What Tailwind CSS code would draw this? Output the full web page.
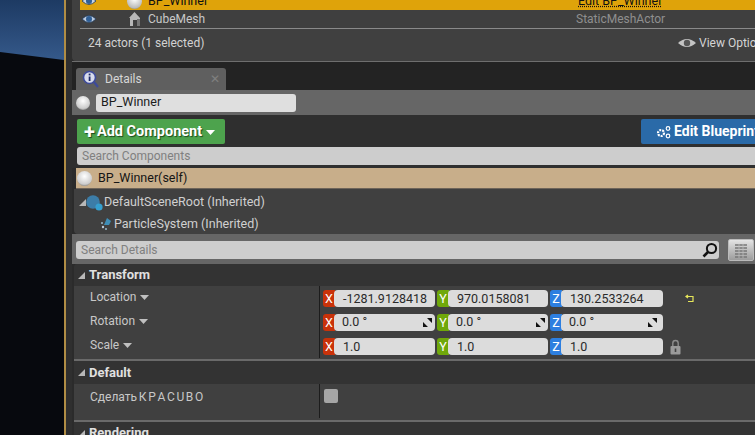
<!DOCTYPE html>
<html lang="en">
<head>
    <meta charset="UTF-8">
    <title>Details panel</title>
    <script src="https://cdn.jsdelivr.net/npm/@tailwindcss/browser@4"></script>
</head>
<body class="bg-[#2b2b2b] overflow-hidden">
<div class="flex w-[800px] h-[435px] overflow-hidden font-[family-name:Roboto,sans-serif] text-[12px] text-[#d4d4d4]">

    <!-- viewport strip -->
    <div class="w-[64px] h-full shrink-0">
        <svg width="64" height="435" viewBox="0 0 64 435" class="block">
            <defs>
                <linearGradient id="sky" x1="0" y1="0" x2="0" y2="1">
                    <stop offset="0" stop-color="#1d3a63"/>
                    <stop offset="1" stop-color="#35598a"/>
                </linearGradient>
            </defs>
            <rect width="64" height="60" fill="url(#sky)"/>
            <polygon points="0,52 64,60 64,435 0,435" fill="#07090e"/>
        </svg>
    </div>
    <div class="w-[2px] shrink-0 bg-[#b08d45]"></div>
    <div class="w-[6px] shrink-0 bg-[#2f2f2f]"></div>

    <div class="flex-1 flex flex-col min-w-0">
        <!-- world outliner tail -->
        <div class="bg-[#404040] rounded-b-[4px] h-[61px] shrink-0 overflow-hidden">
            <div class="ml-[8px] -mt-[8px] h-[18px] bg-[#dfa30a] flex items-center text-[#111] text-[12.5px]">
                <svg width="16" height="12" viewBox="0 0 16 12" class="ml-[1px]"><path d="M1 6 Q8 -1 15 6 Q8 13 1 6Z" fill="#c8d4e4" stroke="#1e3a5a" stroke-width="0.8"/><circle cx="8" cy="6" r="3" fill="#2f5f96"/></svg>
                <div class="ml-[30px] w-[15px] h-[15px] rounded-full bg-[radial-gradient(circle_at_50%_35%,#fff,#bbb_70%,#555)]"></div>
                <span class="ml-[6px] w-[430px]">BP_Winner</span>
                <span class="underline decoration-dotted">Edit BP_Winner</span>
            </div>
            <div class="ml-[8px] h-[18px] bg-[#3f3f3f] flex items-center text-[12px] text-[#c8c8c8] border-b border-[#8a8a8a] box-content">
                <svg width="16" height="12" viewBox="0 0 16 12" class="ml-[1px]"><path d="M1 6 Q8 -1 15 6 Q8 13 1 6Z" fill="#b9c8dc" stroke="#1e3a5a" stroke-width="0.8"/><circle cx="8" cy="6" r="3" fill="#2f5f96"/></svg>
                <svg width="13" height="16" viewBox="0 0 13 16" class="ml-[31px]"><path d="M6.5 1 L12 7 V15 H9 V9 H5 V15 H2 V7 L1 7 Z" fill="#b8b8b8"/><rect x="9" y="8" width="3" height="7" fill="#777"/></svg>
                <span class="ml-[7px] w-[428px]">CubeMesh</span>
                <span class="text-[#8f8f8f]">StaticMeshActor</span>
            </div>
            <div class="flex items-center h-[32px] pl-[16px] pb-[4px] text-[12px]">
                <span class="w-[590px] text-[#d2d2d2]">24 actors (1 selected)</span>
                <svg width="18" height="12" viewBox="0 0 18 12"><path d="M0 6 Q9 -2 18 6 Q9 14 0 6Z" fill="#c4c4c4"/><circle cx="9" cy="6" r="3.2" fill="#555"/></svg>
                <span class="ml-[3px] whitespace-nowrap">View Options</span>
            </div>
        </div>
        <div class="h-px shrink-0 bg-[#6e6e6e]"></div>

        <!-- tab strip -->
        <div class="h-[28px] shrink-0 bg-[#232323] flex items-end pl-[4px]">
            <div class="w-[150px] h-[22px] bg-[#5f5f5f] rounded-t-[3px] flex items-center pl-[6px]">
                <svg width="17" height="18" viewBox="0 0 17 18"><circle cx="7.5" cy="7.5" r="6" fill="#d8dcec" stroke="#3d4a9a" stroke-width="1.6"/><line x1="12" y1="12" x2="16" y2="17" stroke="#3d4a9a" stroke-width="2.2"/><rect x="6.7" y="6.5" width="1.8" height="4.5" fill="#1e2a6a"/><rect x="6.7" y="3.6" width="1.8" height="1.8" fill="#1e2a6a"/></svg>
                <span class="ml-[6px] w-[105px] text-[#d6d6d6]">Details</span>
                <span class="text-[#808080] text-[12px] leading-none">✕</span>
            </div>
        </div>

        <!-- actor name strip -->
        <div class="h-[25px] shrink-0 bg-[#666] flex items-center pl-[4px]">
            <div class="w-[14px] h-[14px] rounded-full bg-[radial-gradient(circle_at_50%_35%,#fff,#ccc_65%,#444)]"></div>
            <div class="ml-[6px] w-[200px] h-[18px] bg-[#dfdfdf] rounded-[3px] flex items-center pl-[5px] text-[#1c1c1c] text-[12.5px]">BP_Winner</div>
        </div>

        <!-- components toolbar -->
        <div class="h-[31px] shrink-0 bg-[#2f2f2f] flex items-center justify-between pl-[5px] pt-[2px]">
            <div class="w-[148px] h-[25px] bg-[#4da34d] rounded-[2px] flex items-center pl-[7px] font-bold text-[14.5px] text-white [text-shadow:1px_1px_1px_#1c4a1c]">
                <span class="mr-[2px] text-[20px] leading-none">+</span>Add Component
                <svg width="9" height="6" viewBox="0 0 9 6" class="ml-[4px]"><path d="M0 1H9L4.5 6Z" fill="#fff"/></svg>
            </div>
            <div class="w-[159px] h-[25px] bg-[#2a6aa8] rounded-[2px] flex items-center pl-[15px] font-bold text-[14px] text-white whitespace-nowrap">
                <svg width="15" height="14" viewBox="0 0 15 14" class="mr-[3px]"><circle cx="5" cy="8" r="3" fill="none" stroke="#fff" stroke-width="2.2" stroke-dasharray="2 1"/><circle cx="12" cy="3.5" r="1.8" fill="none" stroke="#fff" stroke-width="1.2"/><circle cx="12" cy="11" r="1.8" fill="none" stroke="#fff" stroke-width="1.2"/></svg>
                Edit Blueprint
            </div>
        </div>

        <div class="h-[22px] shrink-0 bg-[#2f2f2f] pl-[5px] pt-px">
            <div class="h-[18px] bg-[#cdcdcd] rounded-l-[3px] flex items-center pl-[5px] text-[#808080]">Search Components</div>
        </div>
        <div class="h-[21px] shrink-0 ml-[4px] bg-[#c8ae8a] border-b border-[#6e6459] flex items-center pl-[1px] text-[#151515] text-[12.5px]">
            <div class="w-[15px] h-[15px] rounded-full bg-[radial-gradient(circle_at_50%_35%,#fff,#ccc_65%,#333)]"></div>
            <span class="ml-[6px]">BP_Winner(self)</span>
        </div>

        <!-- component tree -->
        <div class="h-[45px] shrink-0 ml-[2px] bg-[#404040] rounded-b-[4px] flex flex-col text-[12.5px] text-[#d0d0d0]">
            <div class="h-[27px] flex items-center pl-[5px]">
                <svg width="7" height="7" viewBox="0 0 7 7"><path d="M7 0V7H0Z" fill="#b8b8b8"/></svg>
                <svg width="18" height="18" viewBox="0 0 18 18" class="-ml-px"><circle cx="8" cy="8" r="6.8" fill="#3c7da8"/><circle cx="14" cy="13" r="3.6" fill="#35a0d0"/></svg>
                <span class="ml-[1px]">DefaultSceneRoot (Inherited)</span>
            </div>
            <div class="h-[16px] flex items-center pl-[26px]">
                <svg width="12" height="14" viewBox="0 0 12 14"><path d="M7 1 L11 4 L9 8 L4 8 Z" fill="#3f8fb8"/><circle cx="3" cy="10" r="1.2" fill="#bcd"/><circle cx="6" cy="12" r="1" fill="#9bc"/><circle cx="2" cy="6" r="1" fill="#9bc"/></svg>
                <span class="ml-[2px]">ParticleSystem (Inherited)</span>
            </div>
        </div>

        <!-- search details -->
        <div class="h-[30px] shrink-0 bg-[#666] flex items-center pl-[4px] pt-[2px]">
            <div class="w-[643px] h-[18px] bg-[#cdcdcd] rounded-[3px] flex items-center justify-between pl-[5px] pr-[1px] text-[#808080]">
                Search Details
                <svg width="16" height="16" viewBox="0 0 16 16"><circle cx="9.5" cy="6.5" r="4.6" fill="none" stroke="#111" stroke-width="2"/><line x1="6" y1="10" x2="1.5" y2="14.5" stroke="#111" stroke-width="2.6"/></svg>
            </div>
            <div class="ml-[9px] w-[26px] h-[22px] rounded-[2px] bg-gradient-to-b from-[#e4e4e4] to-[#9c9c9c] border border-[#bbb] flex items-center justify-center">
                <svg width="14" height="15" viewBox="0 0 14 15"><path d="M1 2H13M1 5H13M1 8H13M1 11H13M1 14H13" stroke="#777" stroke-width="1.6"/><path d="M5 1V15M9 1V15" stroke="#bbb" stroke-width="0.8"/></svg>
            </div>
        </div>

        <!-- Transform -->
        <div class="h-[22px] shrink-0 ml-[2px] bg-[#333] rounded-t-[3px] flex items-center pl-[4px] font-bold text-[13px] text-[#e0e0e0]">
            <svg width="7" height="7" viewBox="0 0 7 7"><path d="M7 0V7H0Z" fill="#b8b8b8"/></svg>
            <span class="ml-[4px]">Transform</span>
        </div>
        <div class="h-[75px] shrink-0 ml-[2px] bg-[#404040] flex border-b-2 border-[#6a6a6a]">
            <div class="w-[245px] shrink-0 flex flex-col pl-[16px] -mt-px text-[#c8c8c8]">
                <div class="h-[24px] shrink-0 flex items-center">Location<svg width="9" height="5" viewBox="0 0 9 5" class="ml-[4px]"><path d="M0 0H9L4.5 5Z" fill="#c0c0c0"/></svg></div>
                <div class="h-[24px] shrink-0 flex items-center">Rotation<svg width="9" height="5" viewBox="0 0 9 5" class="ml-[4px]"><path d="M0 0H9L4.5 5Z" fill="#c0c0c0"/></svg></div>
                <div class="h-[24px] shrink-0 flex items-center">Scale<svg width="9" height="5" viewBox="0 0 9 5" class="ml-[4px]"><path d="M0 0H9L4.5 5Z" fill="#c0c0c0"/></svg></div>
            </div>
            <div class="w-px h-[72px] shrink-0 bg-[#1c1c1c]"></div>
            <div class="flex flex-col gap-[7px] pl-[3px] pt-[4px] text-[12.5px] text-[#2a2a2a]">
                <div class="flex items-center h-[17px]">
                    <span class="w-[12px] h-[17px] bg-[#c9320a] rounded-l-[3px] text-white text-center leading-[17px]">X</span>
                    <span class="w-[101px] h-[17px] bg-[#dcdcdc] rounded-[4px] -ml-px pl-[9px] leading-[17px]">-1281.9128418</span>
                    <span class="ml-[2px] w-[12px] h-[17px] bg-[#6fa80a] rounded-l-[3px] text-white text-center leading-[17px]">Y</span>
                    <span class="w-[100px] h-[17px] bg-[#dcdcdc] rounded-[4px] -ml-px pl-[9px] leading-[17px]">970.0158081</span>
                    <span class="ml-[2px] w-[12px] h-[17px] bg-[#2d7fe0] rounded-l-[3px] text-white text-center leading-[17px]">Z</span>
                    <span class="w-[102px] h-[17px] bg-[#dcdcdc] rounded-[4px] -ml-px pl-[9px] leading-[17px]">130.2533264</span>
                    <svg width="10" height="9" viewBox="0 0 10 9" class="ml-[22px]"><path d="M3 1 L1 2.5 L3 4 M1 2.5 H8 V7.5 H3" fill="none" stroke="#e6e65a" stroke-width="1.2"/></svg>
                </div>
                <div class="flex items-center h-[17px]">
                    <span class="w-[12px] h-[17px] bg-[#c9320a] rounded-l-[3px] text-white text-center leading-[17px]">X</span>
                    <span class="w-[101px] h-[17px] bg-[#dcdcdc] rounded-[4px] -ml-px pl-[8px] pr-[3px] flex items-center justify-between">0.0 °<svg width="9" height="9" viewBox="0 0 9 9"><path d="M0 9V4L5 9ZM9 0V5L4 0Z" fill="#111"/></svg></span>
                    <span class="ml-[2px] w-[12px] h-[17px] bg-[#6fa80a] rounded-l-[3px] text-white text-center leading-[17px]">Y</span>
                    <span class="w-[100px] h-[17px] bg-[#dcdcdc] rounded-[4px] -ml-px pl-[8px] pr-[3px] flex items-center justify-between">0.0 °<svg width="9" height="9" viewBox="0 0 9 9"><path d="M0 9V4L5 9ZM9 0V5L4 0Z" fill="#111"/></svg></span>
                    <span class="ml-[2px] w-[12px] h-[17px] bg-[#2d7fe0] rounded-l-[3px] text-white text-center leading-[17px]">Z</span>
                    <span class="w-[102px] h-[17px] bg-[#dcdcdc] rounded-[4px] -ml-px pl-[8px] pr-[6px] flex items-center justify-between">0.0 °<svg width="9" height="9" viewBox="0 0 9 9"><path d="M0 9V4L5 9ZM9 0V5L4 0Z" fill="#111"/></svg></span>
                </div>
                <div class="flex items-center h-[17px]">
                    <span class="w-[12px] h-[17px] bg-[#c9320a] rounded-l-[3px] text-white text-center leading-[17px]">X</span>
                    <span class="w-[101px] h-[17px] bg-[#dcdcdc] rounded-[4px] -ml-px pl-[9px] leading-[17px]">1.0</span>
                    <span class="ml-[2px] w-[12px] h-[17px] bg-[#6fa80a] rounded-l-[3px] text-white text-center leading-[17px]">Y</span>
                    <span class="w-[100px] h-[17px] bg-[#dcdcdc] rounded-[4px] -ml-px pl-[9px] leading-[17px]">1.0</span>
                    <span class="ml-[2px] w-[12px] h-[17px] bg-[#2d7fe0] rounded-l-[3px] text-white text-center leading-[17px]">Z</span>
                    <span class="w-[102px] h-[17px] bg-[#dcdcdc] rounded-[4px] -ml-px pl-[9px] leading-[17px]">1.0</span>
                    <svg width="11" height="16" viewBox="0 0 11 16" class="ml-[7px]"><path d="M2.8 7V4.2a2.7 2.7 0 0 1 5.4 0V7" fill="none" stroke="#8c8c8c" stroke-width="1.4"/><rect x="0.5" y="7" width="10" height="8.5" rx="1" fill="#9a9a9a"/><rect x="4.7" y="9.5" width="1.6" height="3.5" fill="#444"/></svg>
                </div>
            </div>
        </div>

        <!-- Default -->
        <div class="h-[23px] shrink-0 ml-[2px] bg-[#333] flex items-center pl-[4px] font-bold text-[13px] text-[#e0e0e0]">
            <svg width="7" height="7" viewBox="0 0 7 7"><path d="M7 0V7H0Z" fill="#b8b8b8"/></svg>
            <span class="ml-[4px]">Default</span>
        </div>
        <div class="h-[38px] shrink-0 ml-[2px] bg-[#404040] flex border-b-2 border-[#6a6a6a]">
            <div class="w-[245px] shrink-0 pl-[16px] pt-[4px] text-[12px] [word-spacing:-1.3px] text-[#c8c8c8]">Сделать К Р А С U В О</div>
            <div class="w-px h-[34px] shrink-0 bg-[#1c1c1c]"></div>
            <div class="ml-[4px] mt-[5px] w-[14px] h-[14px] rounded-[2px] bg-[#a6a6a6]"></div>
        </div>

        <!-- Rendering -->
        <div class="h-[22px] shrink-0 ml-[2px] bg-[#333] flex items-center pl-[4px] font-bold text-[13px] text-[#e0e0e0]">
            <svg width="7" height="7" viewBox="0 0 7 7"><path d="M7 0V7H0Z" fill="#b8b8b8"/></svg>
            <span class="ml-[4px]">Rendering</span>
        </div>
    </div>
</div>
</body>
</html>
